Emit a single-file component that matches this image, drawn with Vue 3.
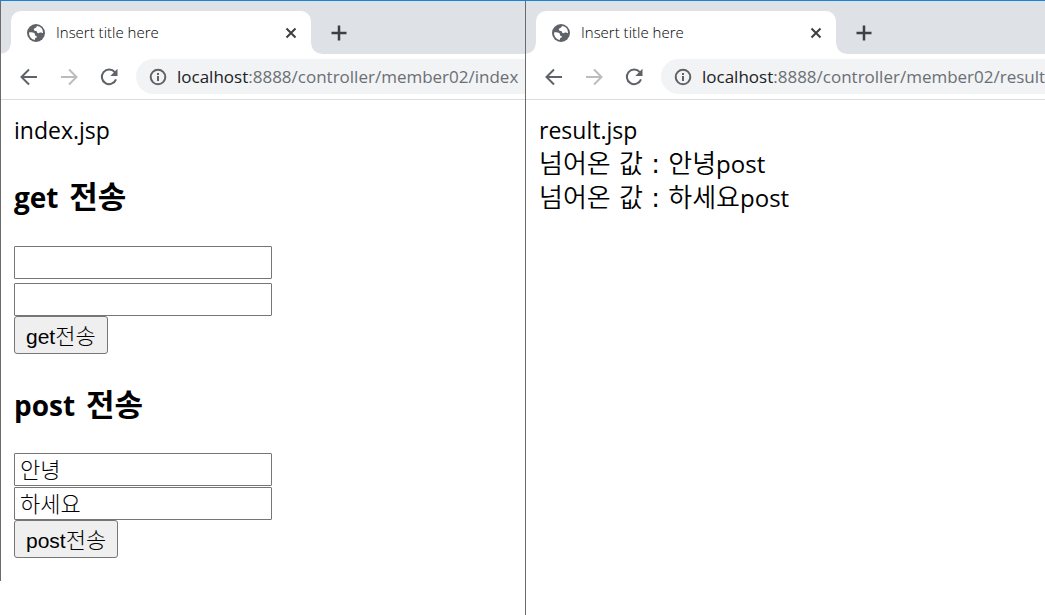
<script setup>
import { ref } from 'vue'

const windows = [
  { id: 'index', path: ':8888/controller/member02/index' },
  { id: 'result', path: ':8888/controller/member02/result' },
]

const forms = [
  { method: 'get', values: ref(['', '']) },
  { method: 'post', values: ref(['안녕', '하세요']) },
]

const results = ['안녕', '하세요']
</script>

<template>
  <main class="desktop">
    <section v-for="win in windows" :key="win.id" class="window" :class="win.id">
      <header class="tabs">
        <div class="tab">
          <svg class="globe" viewBox="0 0 18 18" aria-hidden="true">
            <circle cx="9" cy="9" r="9" fill="#5f6368" />
            <path d="M10.3 2.1C9.2 2.7 9.6 3.700 8.400 4.100C7.200 4.300 6.600 5 6.900 5.900C7.200 6.900 8.600 6.500 9.300 7.100C10.200 7.800 9.800 9 11 9.300C12.300 9.500 12.700 8.500 13.800 8.600C14.900 8.700 15.200 9.400 16.100 9A7.100 7.100 0 0 0 10.300 2.100Z" fill="#fff" />
            <path d="M2 8.500C3.600 8.200 5.900 8.200 7.200 9C8.400 9.800 7.600 11.200 8.500 11.700C9.300 12.100 10.100 12 9.900 13C9.700 14 8.300 13.700 8 14.600L7.900 16A7.100 7.100 0 0 1 2 8.500Z" fill="#fff" />
          </svg>
          <span class="title">Insert title here</span>
          <button class="icon close" type="button" aria-label="Close tab">
            <svg viewBox="0 0 12 12"><path d="M1.500 1.500l9 9M10.500 1.500l-9 9" /></svg>
          </button>
        </div>
        <button class="icon add" type="button" aria-label="New tab">
          <svg viewBox="0 0 16 16"><path d="M8 .5v15M.5 8h15" /></svg>
        </button>
      </header>
      <nav class="toolbar">
        <button class="icon nav" type="button" aria-label="Back">
          <svg viewBox="0 0 18 18"><path d="M17 9H2M9 1.500L1.500 9L9 16.500" /></svg>
        </button>
        <button class="icon nav" type="button" aria-label="Forward" disabled>
          <svg viewBox="0 0 18 18"><path d="M1 9h15M9 1.500L16.500 9L9 16.500" /></svg>
        </button>
        <button class="icon nav" type="button" aria-label="Reload">
          <svg viewBox="0 0 18 18">
            <path d="M14.800 4.200A7.300 7.300 0 1 0 16 11.300" />
            <path class="solid" d="M17.500 .8V8H10.300Z" />
          </svg>
        </button>
        <div class="address">
          <svg class="info" viewBox="0 0 18 18" aria-hidden="true">
            <circle cx="9" cy="9" r="7.300" />
            <path d="M9 8v5M9 5v2" />
          </svg>
          <span class="url"><b>localhost</b>{{ win.path }}</span>
        </div>
      </nav>

      <div v-if="win.id === 'index'" class="page">
        <p>index.jsp</p>
        <form v-for="form in forms" :key="form.method" :class="form.method" @submit.prevent>
          <h2>{{ form.method }}<span class="ko">&nbsp;전송</span></h2>
          <div class="fields">
            <input
              v-for="(value, i) in form.values.value"
              :key="i"
              v-model="form.values.value[i]"
              type="text"
              :aria-label="`${form.method} ${i + 1}`"
            />
          </div>
          <button class="submit" type="submit">{{ form.method }}<span class="ko">전송</span></button>
        </form>
      </div>
      <div v-else class="page">
        <p>result.jsp</p>
        <p v-for="result in results" :key="result" class="value"><span class="ko">넘어온 값<i>&nbsp;:&nbsp;</i>{{ result }}</span>post</p>
      </div>
    </section>
  </main>
</template>

<style>
body {
  margin: 0;
  background: #fff;
}
</style>

<style scoped>
.desktop {
  display: grid;
  grid-template-columns: 525fr 520fr;
  align-items: start;
  min-height: 100vh;
  border-top: 1px solid #1883d7;
  box-sizing: border-box;
  color: #000;
  font-family: "Open Sans", "Noto Sans CJK KR", sans-serif;
}

.window {
  min-width: 0;
  overflow: hidden;
  border-left: 1px solid #6b6b6b;
}

.result {
  align-self: stretch;
}

.tabs {
  display: flex;
  align-items: center;
  height: 53px;
  padding-left: 10px;
  background: #dee1e6;
}

.tab {
  position: relative;
  display: flex;
  align-items: center;
  align-self: flex-end;
  width: 300px;
  height: 43px;
  padding: 0 14px 0 16px;
  box-sizing: border-box;
  border-radius: 10px 10px 0 0;
  background: #fff;
}

.tab::before,
.tab::after {
  content: "";
  position: absolute;
  bottom: 0;
  width: 10px;
  height: 10px;
}

.tab::before {
  right: 100%;
  background: radial-gradient(circle at 0 0, #dee1e6 9px, #fff 10px);
}

.tab::after {
  left: 100%;
  background: radial-gradient(circle at 100% 0, #dee1e6 9px, #fff 10px);
}

.globe {
  width: 18px;
  height: 18px;
}

.title {
  flex: 1;
  margin-left: 11px;
  padding-bottom: 2px;
  font-size: 15px;
  font-weight: 300;
  color: #000;
}

.icon {
  display: flex;
  padding: 0;
  border: 0;
  background: none;
}

.icon path {
  fill: none;
  stroke: #5f6368;
  stroke-width: 2;
}

.icon .solid {
  fill: #5f6368;
  stroke: none;
}

.icon:disabled path {
  stroke: #babcbe;
}

.close svg {
  width: 12px;
  height: 12px;
}

.close path {
  stroke: #3c4043;
}

.add {
  margin: 10px 0 0 20px;
}

.add svg {
  width: 16px;
  height: 16px;
}

.add path {
  stroke: #3c4043;
  stroke-width: 2.500;
}

.toolbar {
  display: flex;
  align-items: center;
  gap: 22px;
  height: 45px;
  padding-left: 19px;
  border-bottom: 1px solid #dadce0;
}

.nav svg {
  width: 18px;
  height: 18px;
}

.address {
  display: flex;
  flex: 1;
  align-items: center;
  gap: 10px;
  min-width: 0;
  height: 35px;
  margin-left: -4px;
  padding-left: 13px;
  border-radius: 18px 0 0 18px;
  background: #f1f3f4;
}

.info {
  flex: none;
  width: 18px;
  height: 18px;
  fill: none;
  stroke: #5f6368;
  stroke-width: 2;
}

.url {
  font-size: 17px;
  white-space: nowrap;
  color: #6b6f74;
}

.url b {
  font-weight: 400;
  color: #202124;
}

.page {
  padding: 14px 13px 23px;
}

p {
  margin: 0;
  font-size: 23px;
  line-height: 33px;
}

.value {
  font-size: 24px;
}

.ko {
  font-family: "DejaVu Sans", "Noto Sans CJK KR", sans-serif;
}

.value .ko {
  font-size: 26px;
  font-weight: 350;
}

.value i {
  font-style: normal;
  font-weight: 400;
}

h2 {
  margin: 0;
  padding: 28px 0 27px;
  font-size: 28px;
  line-height: 44px;
}

h2 .ko {
  font-size: 31px;
}

.post h2 {
  padding: 29px 0 26px;
}

.fields {
  display: grid;
  justify-content: start;
  gap: 4px;
}

.post .fields {
  gap: 1px;
}

input {
  width: 258px;
  height: 33px;
  padding: 0 5px 3px;
  box-sizing: border-box;
  border: 1px solid #767676;
  border-radius: 1px;
  background: #fff;
  color: #000;
  font: 300 22px "Liberation Sans", "Noto Sans CJK KR", sans-serif;
}

.submit {
  display: block;
  height: 38px;
  padding: 0 11px 3px;
  border: 1px solid #767676;
  border-radius: 3px;
  background: #efefef;
  color: #000;
  font: 300 21px "Liberation Sans", "Noto Sans CJK KR", sans-serif;
}

.submit .ko {
  font-size: 22px;
}
</style>
